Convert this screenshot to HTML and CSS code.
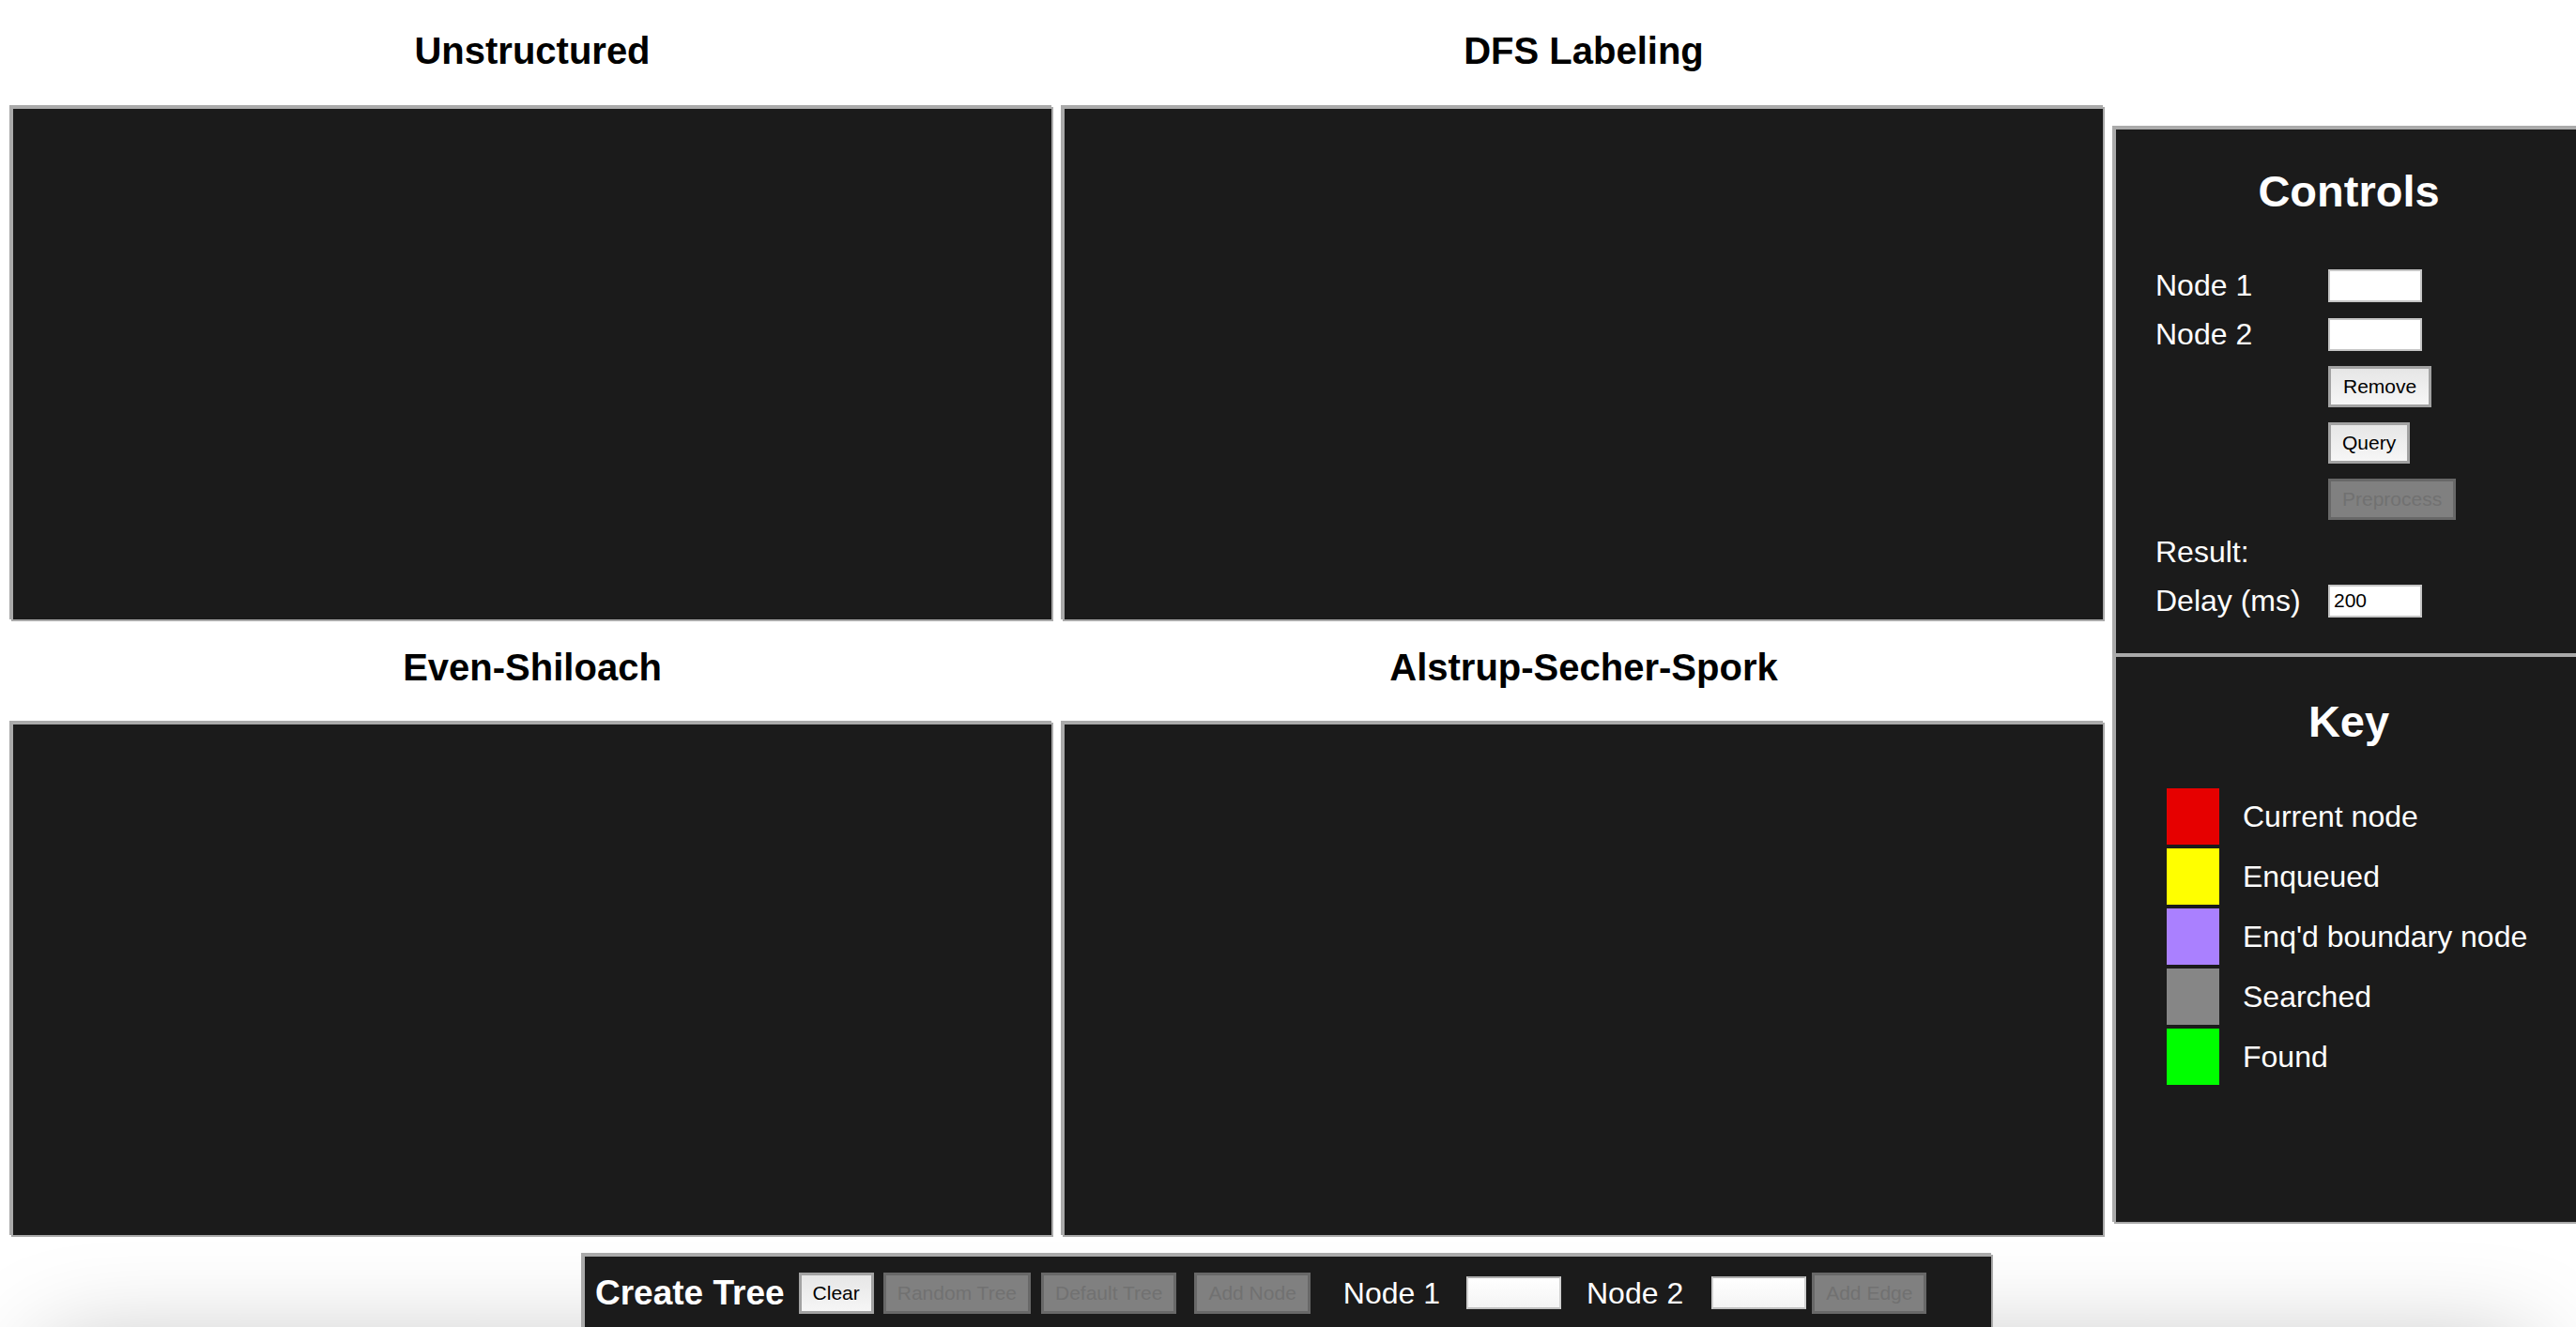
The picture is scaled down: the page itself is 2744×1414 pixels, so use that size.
FILE: index.html
```html
<!DOCTYPE html>
<html lang="en">
<head>
<meta charset="utf-8">
<title>Dynamic Connectivity</title>
<link rel="stylesheet" href="styles.css">
</head>
<body>
<div class="page">
  <main class="boards">
    <h2 class="title title-top">Unstructured</h2>
    <h2 class="title title-top">DFS Labeling</h2>
    <div class="board"></div>
    <div class="board"></div>
    <h2 class="title title-mid">Even-Shiloach</h2>
    <h2 class="title title-mid">Alstrup-Secher-Spork</h2>
    <div class="board"></div>
    <div class="board"></div>
  </main>
  <aside class="side">
    <section class="panel controls">
      <h1 class="panel-title controls-title">Controls</h1>
      <div class="form">
        <span class="label">Node 1</span><input class="field" type="text">
        <span class="label">Node 2</span><input class="field" type="text">
        <span></span><button class="btn btn-remove">Remove</button>
        <span></span><button class="btn">Query</button>
        <span></span><button class="btn btn-off" disabled>Preprocess</button>
        <span class="label">Result:</span><span></span>
        <span class="label">Delay (ms)</span><input class="field" type="text" value="200">
      </div>
    </section>
    <section class="panel key">
      <h1 class="panel-title key-title">Key</h1>
      <ul class="legend">
        <li class="legend-row"><span class="swatch sw-current"></span>Current node</li>
        <li class="legend-row"><span class="swatch sw-enq"></span>Enqueued</li>
        <li class="legend-row"><span class="swatch sw-bound"></span>Enq'd boundary node</li>
        <li class="legend-row"><span class="swatch sw-searched"></span>Searched</li>
        <li class="legend-row"><span class="swatch sw-found"></span>Found</li>
      </ul>
    </section>
  </aside>
</div>
<footer class="footer">
  <div class="bar">
    <span class="bar-title">Create Tree</span>
    <button class="btn bar-btn b-clear">Clear</button>
    <button class="btn btn-off bar-btn b-random" disabled>Random Tree</button>
    <button class="btn btn-off bar-btn b-default" disabled>Default Tree</button>
    <button class="btn btn-off bar-btn b-addnode" disabled>Add Node</button>
    <span class="bar-label l-one">Node 1</span>
    <input class="field bar-field f-one" type="text">
    <span class="bar-label l-two">Node 2</span>
    <input class="field bar-field f-two" type="text">
    <button class="btn btn-off bar-btn b-addedge" disabled>Add Edge</button>
  </div>
</footer>
</body>
</html>
```

FILE: styles.css
```css
html, body {
  margin: 0;
  padding: 0;
  overflow: hidden;
  background: #fff;
  font-family: "Liberation Sans", Arial, Helvetica, sans-serif;
}

.page {
  display: flex;
  align-items: flex-start;
  padding-left: 12px;
}

.boards {
  flex: none;
  display: grid;
  grid-template-columns: 1110px 1110px;
  grid-template-rows: 114px 548px 108px 548px;
  column-gap: 10px;
}

.title {
  margin: 0;
  font-size: 40px;
  font-weight: bold;
  line-height: 46px;
  text-align: center;
  color: #000;
}

.title-top { padding-top: 31px; }
.title-mid { padding-top: 26px; }

.board {
  background: #1b1b1b;
  border: 2px solid #aaa;
  box-shadow: -2px -2px 0 #aaa;
}

.side {
  flex: none;
  width: 500px;
  margin-left: 10px;
  margin-top: 136px;
}

.panel {
  box-sizing: border-box;
  background: #1b1b1b;
  border: 2px solid #aaa;
  box-shadow: -2px -2px 0 #aaa;
  color: #fff;
}

.panel-title {
  margin: 0;
  font-size: 47px;
  line-height: 54px;
  font-weight: bold;
  text-align: center;
}

.controls {
  height: 562px;
  padding-top: 39px;
}

.controls-title { margin-bottom: 55px; }

.form {
  display: grid;
  grid-template-columns: 184px auto;
  grid-template-rows: 36px 36px 44px 44px 44px 36px 36px;
  row-gap: 16px;
  align-items: center;
  justify-items: start;
  padding-left: 42px;
}

.label {
  font-size: 32px;
  line-height: 37px;
  color: #fff;
}

.field {
  box-sizing: border-box;
  width: 100px;
  height: 35px;
  margin: 0;
  padding: 0 4px;
  border: 2px solid #c6c6c6;
  background: #fff;
  font-family: "Liberation Sans", Arial, sans-serif;
  font-size: 21px;
  color: #000;
}

.btn {
  box-sizing: border-box;
  height: 44px;
  margin: 0;
  padding: 0 12px;
  border: 3px solid #a2a2a2;
  background: linear-gradient(#e6e6e6, #f6f6f6);
  font-family: "Liberation Sans", Arial, sans-serif;
  font-size: 21px;
  color: #000;
}

.btn-remove { padding: 0 13px; }

.btn-off {
  background: #808080;
  border-color: #686868;
  color: #717171;
}

.key {
  height: 606px;
  padding-top: 42px;
}

.key-title { margin-bottom: 44px; }

.legend {
  list-style: none;
  margin: 0;
  padding: 0 0 0 54px;
  display: flex;
  flex-direction: column;
  gap: 4px;
}

.legend-row {
  display: flex;
  align-items: center;
  height: 60px;
  font-size: 32px;
  color: #fff;
}

.swatch {
  flex: none;
  width: 56px;
  height: 60px;
  margin-right: 25px;
}

.sw-current { background: #e60000; }
.sw-enq { background: #ffff00; }
.sw-bound { background: #aa80ff; }
.sw-searched { background: #868686; }
.sw-found { background: #00ff00; }

.footer {
  position: relative;
  display: flex;
  justify-content: center;
  margin-top: 19px;
}

.footer::before {
  content: "";
  position: absolute;
  left: 70px;
  right: 70px;
  top: 120px;
  height: 120px;
  background: #bbb;
  box-shadow: 0 0 110px 20px rgba(0, 0, 0, 0.28);
}

.bar {
  position: relative;
  z-index: 1;
  box-sizing: border-box;
  width: 1502px;
  height: 120px;
  padding: 17px 6px 0 11px;
  display: flex;
  align-items: flex-start;
  background: #1b1b1b;
  border: 2px solid #aaa;
  box-shadow: -2px -2px 0 #aaa;
  color: #fff;
}

.bar-title {
  font-size: 37px;
  font-weight: bold;
  line-height: 44px;
  white-space: nowrap;
}

.bar-btn { flex: none; }
.b-clear { margin-left: 15px; }
.b-random { margin-left: 10px; }
.b-default { margin-left: 11px; }
.b-addnode { margin-left: 19px; }
.b-addedge { margin-left: 6px; }

.bar-label {
  font-size: 32px;
  line-height: 44px;
  white-space: nowrap;
}

.l-one { margin-left: 35px; }
.l-two { margin-left: 27px; }

.bar-field {
  width: 101px;
  margin-top: 4px;
  border-color: #b0b0b0 #d0d0d0 #c0c0c0;
  background: linear-gradient(#fff, #f4f4f4);
}

.f-one { margin-left: 28px; }
.f-two { margin-left: 30px; }
```
